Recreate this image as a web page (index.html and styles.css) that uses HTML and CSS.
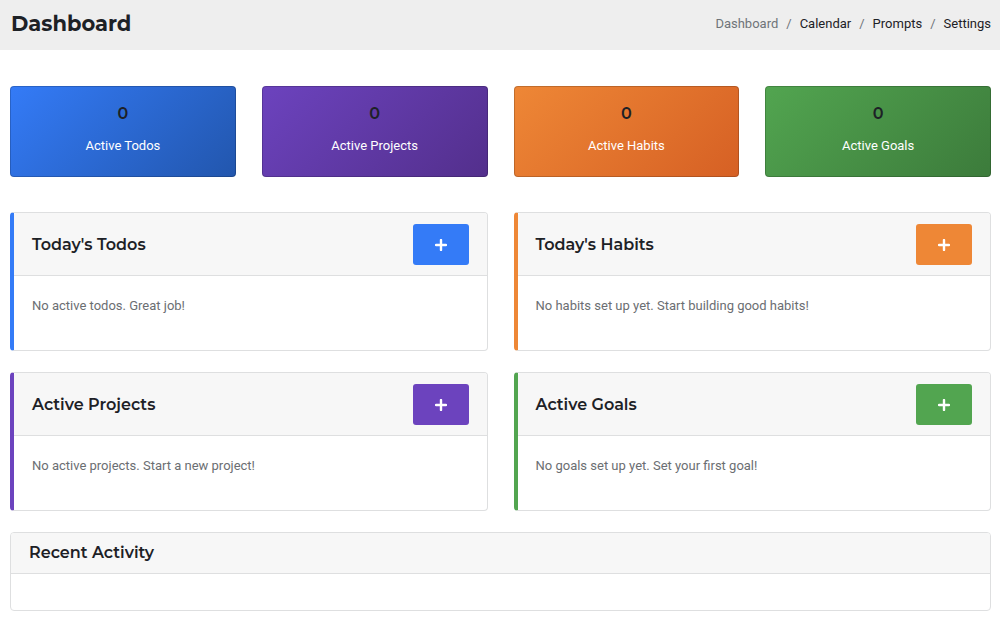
FILE: index.html
```html
<!DOCTYPE html>
<html lang="en">
<head>
    <meta charset="UTF-8">
    <meta name="viewport" content="width=device-width, initial-scale=1.0">
    <title>Dashboard</title>
    <link rel="stylesheet" href="styles.css">
</head>
<body>
    <header class="page-header">
        <h1>Dashboard</h1>
        <nav aria-label="Main">
            <ol class="breadcrumb">
                <li class="active">Dashboard</li>
                <li><a href="#calendar">Calendar</a></li>
                <li><a href="#prompts">Prompts</a></li>
                <li><a href="#settings">Settings</a></li>
            </ol>
        </nav>
    </header>

    <main class="content">
        <!-- Totals -->
        <section class="stats">
            <div class="stat stat-todos">
                <h3>0</h3>
                <p>Active Todos</p>
            </div>
            <div class="stat stat-projects">
                <h3>0</h3>
                <p>Active Projects</p>
            </div>
            <div class="stat stat-habits">
                <h3>0</h3>
                <p>Active Habits</p>
            </div>
            <div class="stat stat-goals">
                <h3>0</h3>
                <p>Active Goals</p>
            </div>
        </section>

        <!-- Lists -->
        <div class="panels">
            <section class="card panel panel-todos">
                <div class="card-header">
                    <h2>Today's Todos</h2>
                    <button type="button" class="btn-add" aria-label="Add todo">
                        <svg viewBox="0 0 12 12" aria-hidden="true"><path d="M6 1v10M1 6h10"/></svg>
                    </button>
                </div>
                <div class="card-body"><p>No active todos. Great job!</p></div>
            </section>
            <section class="card panel panel-habits">
                <div class="card-header">
                    <h2>Today's Habits</h2>
                    <button type="button" class="btn-add" aria-label="Add habit">
                        <svg viewBox="0 0 12 12" aria-hidden="true"><path d="M6 1v10M1 6h10"/></svg>
                    </button>
                </div>
                <div class="card-body"><p>No habits set up yet. Start building good habits!</p></div>
            </section>
            <section class="card panel panel-projects">
                <div class="card-header">
                    <h2>Active Projects</h2>
                    <button type="button" class="btn-add" aria-label="Add project">
                        <svg viewBox="0 0 12 12" aria-hidden="true"><path d="M6 1v10M1 6h10"/></svg>
                    </button>
                </div>
                <div class="card-body"><p>No active projects. Start a new project!</p></div>
            </section>
            <section class="card panel panel-goals">
                <div class="card-header">
                    <h2>Active Goals</h2>
                    <button type="button" class="btn-add" aria-label="Add goal">
                        <svg viewBox="0 0 12 12" aria-hidden="true"><path d="M6 1v10M1 6h10"/></svg>
                    </button>
                </div>
                <div class="card-body"><p>No goals set up yet. Set your first goal!</p></div>
            </section>
        </div>

        <section class="card recent">
            <div class="card-header">
                <h2>Recent Activity</h2>
            </div>
            <div class="card-body"></div>
        </section>
    </main>
</body>
</html>
```

FILE: styles.css
```css
* {
    box-sizing: border-box;
}

body {
    margin: 0;
    background: #fff;
    color: #1d2126;
    font-family: Roboto, sans-serif;
    font-size: 13px;
    line-height: 20px;
}

h1, h2, h3, p {
    margin: 0;
}

h1, h2, h3 {
    font-family: Montserrat, Inter, sans-serif;
    font-weight: 600;
}

.page-header {
    display: flex;
    justify-content: space-between;
    align-items: center;
    padding: 8px 9px 10px 11px;
    background: #eee;
}

.page-header h1 {
    font-size: 21px;
    font-weight: 700;
    line-height: 32px;
}

.breadcrumb {
    display: flex;
    margin: 0;
    padding: 0;
    list-style: none;
    color: #6f7479;
}

.breadcrumb li + li::before {
    content: "/";
    padding: 0 8px;
    color: #6f7479;
}

.breadcrumb a {
    color: #1d2126;
    text-decoration: none;
}

.content {
    padding: 36px 9px 22px 10px;
}

.stats {
    display: grid;
    grid-template-columns: repeat(4, 1fr);
    gap: 26px;
    margin-bottom: 35px;
}

.stat {
    padding: 17px;
    border: 1px solid rgba(0, 0, 0, 0.18);
    border-radius: 4px;
    text-align: center;
}

.stat h3 {
    margin-bottom: 12px;
    font-size: 16px;
    line-height: 20px;
}

.stat p {
    padding-bottom: 3px;
    color: #fff;
}

.stat-todos {
    background: linear-gradient(135deg, #347bf7, #2256ad) border-box;
}

.stat-projects {
    background: linear-gradient(135deg, #6c43be, #532f8c) border-box;
}

.stat-habits {
    background: linear-gradient(135deg, #ee8736, #d66024) border-box;
}

.stat-goals {
    background: linear-gradient(135deg, #52a550, #3c7b3b) border-box;
}

.panels {
    display: grid;
    grid-template-columns: repeat(2, 1fr);
    gap: 21px 26px;
    margin-bottom: 21px;
}

.card {
    border: 1px solid #dedfe0;
    border-radius: 4px;
}

.card-header {
    padding: 10px 18px;
    border-bottom: 1px solid #dedfe0;
    border-radius: 3px 3px 0 0;
    background: #f7f7f7;
}

.card-header h2 {
    font-size: 16px;
    line-height: 20px;
}

.card-body {
    min-height: 36px;
    padding: 20px 18px 34px;
    color: #6b6e72;
}

.panel {
    border-left: 4px solid var(--accent);
}

.panel .card-header {
    display: flex;
    justify-content: space-between;
    align-items: center;
    padding: 11px 18px 10px;
}

.recent .card-body {
    padding: 18px;
}

.panel-todos {
    --accent: #347bf7;
}

.panel-habits {
    --accent: #ee8736;
}

.panel-projects {
    --accent: #6c43be;
}

.panel-goals {
    --accent: #52a550;
}

.btn-add {
    display: flex;
    justify-content: center;
    align-items: center;
    width: 56px;
    height: 41px;
    padding: 0;
    border: none;
    border-radius: 3px;
    background: var(--accent);
    cursor: pointer;
}

.btn-add svg {
    width: 12px;
    height: 12px;
    fill: none;
    stroke: #fff;
    stroke-width: 2.4;
    stroke-linecap: round;
}

@media (max-width: 700px) {
    .stats {
        grid-template-columns: repeat(2, 1fr);
    }

    .panels {
        grid-template-columns: 1fr;
    }
}
```
